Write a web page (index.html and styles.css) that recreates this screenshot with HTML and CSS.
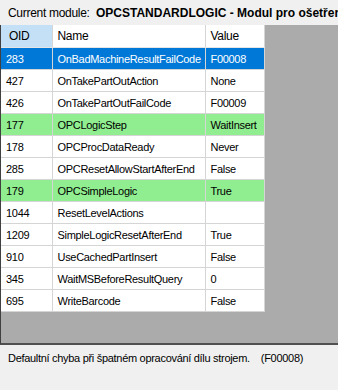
FILE: index.html
```html
<!DOCTYPE html>
<html lang="cs">
  <head>
    <meta charset="UTF-8" />
    <title>Moduly</title>
    <link rel="stylesheet" href="styles.css">
  </head>
  <body>
    <div class="modulebar">
      <span class="label">Current module:</span>
      <span class="module">OPCSTANDARDLOGIC - Modul pro ošetření výsledků</span>
    </div>

    <div class="gridarea">
      <table class="grid">
        <colgroup>
          <col class="c-oid">
          <col class="c-name">
          <col class="c-value">
        </colgroup>
        <thead>
          <tr>
            <th class="sorted">OID</th>
            <th>Name</th>
            <th>Value</th>
          </tr>
        </thead>
        <tbody>
          <tr class="selected"><td>283</td><td>OnBadMachineResultFailCode</td><td>F00008</td></tr>
          <tr><td>427</td><td>OnTakePartOutAction</td><td>None</td></tr>
          <tr><td>426</td><td>OnTakePartOutFailCode</td><td>F00009</td></tr>
          <tr class="changed"><td>177</td><td>OPCLogicStep</td><td>WaitInsert</td></tr>
          <tr><td>178</td><td>OPCProcDataReady</td><td>Never</td></tr>
          <tr><td>285</td><td>OPCResetAllowStartAfterEnd</td><td>False</td></tr>
          <tr class="changed"><td>179</td><td>OPCSimpleLogic</td><td>True</td></tr>
          <tr><td>1044</td><td>ResetLevelActions</td><td></td></tr>
          <tr><td>1209</td><td>SimpleLogicResetAfterEnd</td><td>True</td></tr>
          <tr><td>910</td><td>UseCachedPartInsert</td><td>False</td></tr>
          <tr><td>345</td><td>WaitMSBeforeResultQuery</td><td>0</td></tr>
          <tr><td>695</td><td>WriteBarcode</td><td>False</td></tr>
        </tbody>
      </table>
    </div>

    <div class="status">Defaultní chyba při špatném opracování dílu strojem.&nbsp;&nbsp;&nbsp; (F00008)</div>
  </body>
</html>
```

FILE: styles.css
```css
/* Okno s parametry modulu */
body {
    margin: 0;
    width: 338px;
    height: 390px;
    overflow: hidden;
    background: #f0f0f0;
    font-family: "Liberation Sans", Arial, sans-serif;
    font-size: 11px;
    letter-spacing: -0.3px;
    color: #000;
}

.modulebar {
    height: 25px;
    display: flex;
    align-items: center;
    padding-left: 8px;
    white-space: nowrap;
    overflow: hidden;
    font-size: 12px;
    letter-spacing: 0;
}

.modulebar .label {
    flex-shrink: 0;
    width: 88px;
    letter-spacing: -0.3px;
}

.modulebar .module {
    flex-shrink: 0;
    font-weight: bold;
}

.gridarea {
    height: 320px;
    background: #ababab;
    border-left: 1px solid #404040;
    border-bottom: 2px solid #505050;
    box-sizing: border-box;
}

.grid {
    border-collapse: collapse;
    table-layout: fixed;
    width: 263px;
    background: #fff;
}

.c-oid { width: 51px; }
.c-name { width: 153px; }
.c-value { width: 59px; }

.grid th,
.grid td {
    height: 21px;
    padding: 0 0 0 5px;
    text-align: left;
    font-weight: normal;
    border-right: 1px solid #d5d5d5;
    border-bottom: 1px solid #d5d5d5;
    white-space: nowrap;
    overflow: hidden;
}

.grid th {
    height: 22px;
    font-size: 12px;
    border-bottom: 1px solid #e5e5e5;
}

.grid th.sorted {
    background: #c4e0f6;
    padding-left: 8px;
}

.grid tr.selected td {
    background: #0078d7;
    color: #fff;
}

.grid tr.changed td {
    background: #90ee90;
}

.status {
    padding: 7px 0 0 8px;
    white-space: nowrap;
}
```
